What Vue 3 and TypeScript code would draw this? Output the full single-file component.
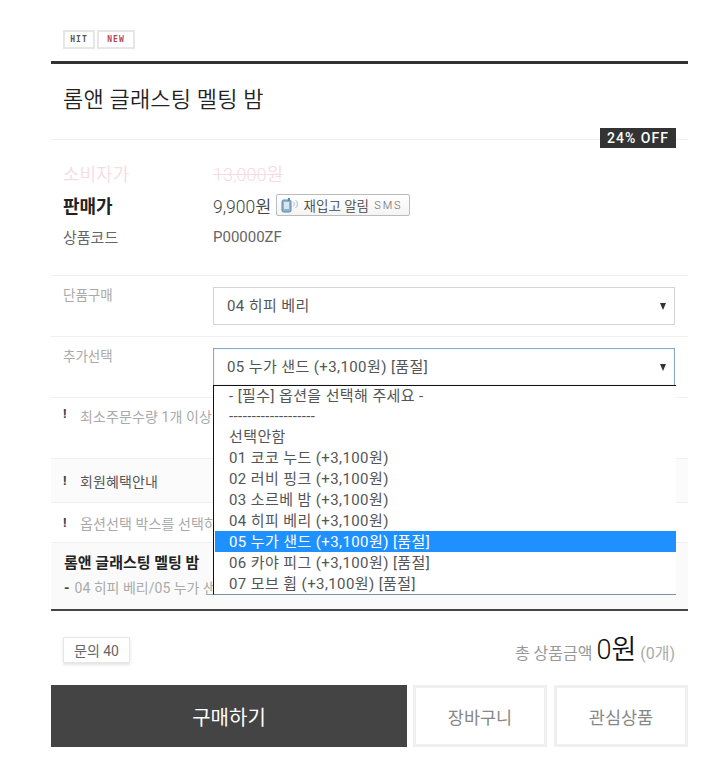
<script setup lang="ts">
import { ref } from 'vue'

const options = ref([
  '- [필수] 옵션을 선택해 주세요 -',
  '-------------------',
  '선택안함',
  '01 코코 누드 (+3,100원)',
  '02 러비 핑크 (+3,100원)',
  '03 소르베 밤 (+3,100원)',
  '04 히피 베리 (+3,100원)',
  '05 누가 샌드 (+3,100원) [품절]',
  '06 카야 피그 (+3,100원) [품절]',
  '07 모브 휩 (+3,100원) [품절]',
])
const selected = ref(7)
</script>

<template>
  <div class="page">
    <div class="icons">
      <span class="tag">HIT</span>
      <span class="tag red">NEW</span>
    </div>

    <div class="head">
      <h2>롬앤 글래스팅 멜팅 밤</h2>
      <span class="off">24% OFF</span>
    </div>

    <div class="info">
      <div class="row custom">
        <span class="key">소비자가</span>
        <span class="strike">13,000원</span>
      </div>
      <div class="row sale">
        <span class="key">판매가</span>
        <span class="price">9,900원</span>
        <span class="sms">
          <svg width="20" height="16" viewBox="0 0 20 16">
            <rect x="1" y="3" width="9" height="12" rx="1.5" fill="#8fb4cf" stroke="#5f8aa8" />
            <rect x="3" y="5" width="5" height="7" fill="#d6e6f1" />
            <rect x="7" y="1" width="2" height="3" fill="#5f8aa8" />
            <path d="M12 4.5a3 3 0 0 1 0 5M14.5 3a5 5 0 0 1 0 8" fill="none" stroke="#9fbdd2" />
          </svg>
          재입고 알림 <small>SMS</small>
        </span>
      </div>
      <div class="row code">
        <span class="key">상품코드</span>
        <span>P00000ZF</span>
      </div>
    </div>

    <div class="opt first">
      <span class="opt-label">단품구매</span>
      <div class="select">04 히피 베리<i class="arrow"></i></div>
    </div>

    <div class="opt second">
      <span class="opt-label">추가선택</span>
      <div class="select-wrap">
        <div class="select focus">05 누가 샌드 (+3,100원) [품절]<i class="arrow"></i></div>
        <ul class="dropdown">
          <li v-for="(o, i) in options" :key="o" :class="{ on: i === selected }">{{ o }}</li>
        </ul>
      </div>
    </div>

    <p class="note tall"><b>!</b>최소주문수량 1개 이상</p>
    <p class="note member"><b>!</b>회원혜택안내</p>
    <p class="note pick"><b>!</b>옵션선택 박스를 선택하</p>

    <div class="picked">
      <strong>롬앤 글래스팅 멜팅 밤</strong>
      <p><em>-</em>04 히피 베리/05 누가 샌드</p>
    </div>

    <div class="total-row">
      <button class="qna">문의 40</button>
      <div class="total">총 상품금액 <strong>0원</strong> <span>(0개)</span></div>
    </div>

    <div class="actions">
      <button class="buy">구매하기</button>
      <button class="ghost">장바구니</button>
      <button class="ghost">관심상품</button>
    </div>
  </div>
</template>

<style>
body {
  background: #fff;
}
</style>

<style scoped>
.page {
  width: 637px;
  margin-left: 51px;
  padding-top: 30px;
  font-family: Roboto, "Noto Sans CJK KR", sans-serif;
  font-size: 14px;
  color: #555;
}

.icons {
  display: flex;
  gap: 2px;
  padding: 0 12px 12px;
}
.tag {
  box-sizing: border-box;
  width: 32px;
  height: 19px;
  border: 2px solid #e6e6e6;
  font: bold 8px/15px "DejaVu Sans Mono", monospace;
  letter-spacing: 1px;
  text-align: center;
  color: #555;
}
.tag.red {
  width: 38px;
  color: #b5474f;
}

.head {
  position: relative;
  border-top: 3px solid #333;
  border-bottom: 1px solid #f0f0f0;
  height: 75px;
  padding: 0 12px;
}
.head h2 {
  margin: 0;
  padding-top: 20px;
  font-size: 22px;
  line-height: 32px;
  font-weight: 350;
  letter-spacing: 0.2px;
  color: #222;
}
.off {
  position: absolute;
  right: 12px;
  top: 64px;
  width: 76px;
  height: 20px;
  background: #333;
  color: #fff;
  font-size: 14px;
  font-weight: 500;
  line-height: 20px;
  letter-spacing: 1px;
  text-align: center;
}

.info {
  padding: 17px 12px 24px;
  border-bottom: 1px solid #f0f0f0;
}
.row {
  display: flex;
  align-items: center;
}
.key {
  width: 150px;
  flex: none;
}
.custom {
  height: 32px;
  font-size: 18px;
  color: #f6dbe0;
  font-weight: 350;
}
.strike {
  text-decoration: line-through;
}
.sale {
  height: 32px;
  margin-bottom: 1px;
  font-size: 17.5px;
  color: #444;
  font-weight: 350;
}
.sale .key {
  font-size: 18px;
  font-weight: 700;
  color: #222;
}
.sms {
  display: flex;
  align-items: center;
  box-sizing: border-box;
  width: 134px;
  height: 22px;
  margin-left: 5px;
  padding-left: 4px;
  border: 1px solid #bbb;
  border-radius: 2px;
  background: linear-gradient(#fff, #f4f4f4);
  font-size: 13.5px;
  color: #444;
  white-space: pre;
}
.sms svg {
  margin-right: -1px;
}
.sms small {
  margin-left: 2px;
  font-size: 11px;
  letter-spacing: 1.9px;
  color: #666;
}
.code {
  height: 29px;
  font-size: 15px;
  color: #666;
}

.opt {
  display: flex;
  padding: 11px 13px 11px 12px;
  border-bottom: 1px solid #f0f0f0;
}
.opt-label {
  width: 150px;
  flex: none;
  margin-top: -3px;
  font-size: 13.5px;
  color: #aaa;
}
.select-wrap {
  position: relative;
  flex: 1;
}
.select {
  position: relative;
  flex: 1;
  box-sizing: border-box;
  height: 38px;
  padding-left: 13px;
  border: 1px solid #d5d5d5;
  font-size: 15px;
  letter-spacing: 0.4px;
  line-height: 36px;
  color: #555;
}
.select.focus {
  border: 1px solid #8aa9c9;
  box-shadow: inset 0 0 1px #9db9d6;
}
.arrow {
  position: absolute;
  right: 8px;
  top: 15px;
  border-left: 3.5px solid transparent;
  border-right: 3.5px solid transparent;
  border-top: 7px solid #333;
}
.dropdown {
  position: absolute;
  left: 0;
  top: 37px;
  z-index: 2;
  box-sizing: border-box;
  width: 463px;
  height: 210px;
  margin: 0;
  padding: 0 0 0 1px;
  list-style: none;
  background: #fff;
  border-top: 1px solid #111;
  border-left: 1px solid #111;
  border-bottom: 1px solid #7b93ad;
  font-size: 15px;
  letter-spacing: 0.4px;
  color: #555;
}
.dropdown li {
  height: 21px;
  line-height: 22px;
  padding-left: 14px;
  white-space: nowrap;
}
.dropdown li:nth-child(-n + 2) {
  height: 20px;
  line-height: 20px;
}
.dropdown li.on {
  background: #1e90ff;
  color: #fff;
}

.note {
  margin: 0;
  padding: 0 12px;
  display: flex;
  align-items: center;
  font-size: 14px;
  letter-spacing: 0.1px;
  color: #aaa;
  border-bottom: 1px solid #f0f0f0;
}
.note b {
  width: 17px;
  color: #444;
  font-size: 13px;
}
.tall {
  align-items: flex-start;
  height: 61px;
  padding-top: 8px;
  box-sizing: border-box;
}
.member {
  height: 43px;
  background: #fbfbfb;
  color: #555;
}
.pick {
  height: 39px;
}

.picked {
  height: 68px;
  padding: 9px 13px 0;
  box-sizing: border-box;
  background: #fafafa;
  border-bottom: 2px solid #444;
}
.picked strong {
  display: block;
  font-size: 15px;
  line-height: 22px;
  color: #222;
}
.picked p {
  margin: 3px 0 0;
  font-size: 14px;
  color: #aaa;
}
.picked em {
  font-style: normal;
  font-weight: 700;
  color: #444;
  margin-right: 5px;
}

.total-row {
  display: flex;
  align-items: center;
  justify-content: space-between;
  height: 74px;
  padding: 0 13px 0 12px;
}
.qna {
  width: 67px;
  height: 26px;
  margin-top: 4px;
  padding: 0;
  border: 1px solid #e6e6e6;
  background: #fff;
  box-shadow: 0 2px 3px #e4e4e4;
  font: 14px Roboto, "Noto Sans CJK KR", sans-serif;
  color: #666;
}
.total {
  margin-top: -2px;
  color: #999;
  font-size: 16px;
}
.total strong {
  font-size: 27px;
  font-weight: 350;
  color: #111;
}
.total span {
  font-size: 16px;
  color: #aaa;
}

.actions {
  display: flex;
  height: 62px;
}
button {
  font-family: Roboto, "Noto Sans CJK KR", sans-serif;
}
.buy {
  width: 356px;
  margin-right: 6px;
  border: none;
  background: #444;
  color: #fff;
  font-size: 20px;
}
.ghost {
  width: 134px;
  border: 3px solid #f0f0f0;
  background: #fff;
  color: #888;
  font-size: 17.5px;
}
.ghost + .ghost {
  margin-left: 7px;
}
</style>
